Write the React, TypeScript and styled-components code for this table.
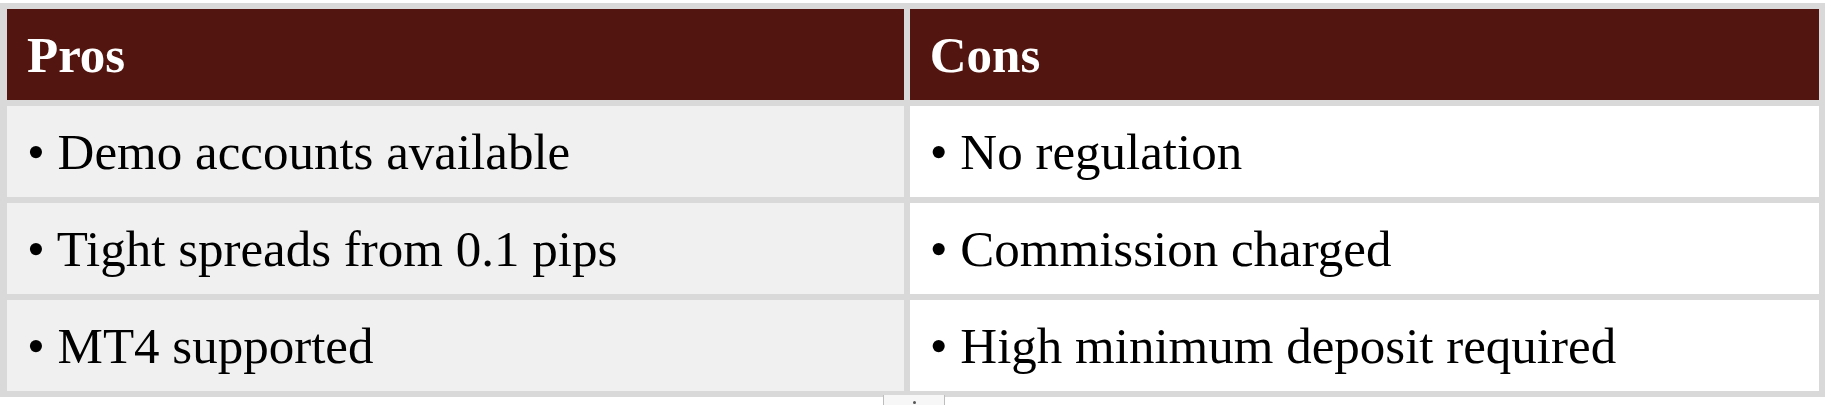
import styled, { createGlobalStyle } from 'styled-components';

const GlobalStyle = createGlobalStyle`
  html, body {
    margin: 0;
    padding: 0;
    background: #ffffff;
  }
  body {
    font-family: "Liberation Serif", "Times New Roman", serif;
    color: #000;
  }
`;

const Page = styled.div`
  padding-top: 3px;
  width: 1828px;
`;

const Table = styled.table`
  width: 1825px;
  border-collapse: separate;
  border-spacing: 6px;
  background: #d9d9d9;
  border-left: 1px solid #d9d9d9;
  table-layout: fixed;
`;

const HeadCell = styled.th`
  height: 91px;
  padding: 0 20px;
  background: #52150f;
  color: #ffffff;
  font-size: 51px;
  font-weight: 700;
  text-align: left;
  vertical-align: middle;
`;

const Cell = styled.td<{ $shaded?: boolean }>`
  height: 91px;
  padding: 0 20px;
  background: ${(p) => (p.$shaded ? '#f0f0f0' : '#ffffff')};
  font-size: 51px;
  vertical-align: middle;
  white-space: nowrap;
`;

const Footer = styled.div`
  display: flex;
  justify-content: center;
  margin-top: -2px;
`;

const Handle = styled.div`
  width: 60px;
  height: 10px;
  background: #f7f7f7;
  border-left: 1px solid #bdbdbd;
  border-right: 1px solid #bdbdbd;
  display: flex;
  justify-content: center;
  align-items: flex-end;
`;

const HandleDot = styled.span`
  width: 3px;
  height: 3px;
  background: #555;
  border-radius: 50%;
  margin-bottom: 1px;
`;

const rows = [
  ['Demo accounts available', 'No regulation'],
  ['Tight spreads from 0.1 pips', 'Commission charged'],
  ['MT4 supported', 'High minimum deposit required'],
];

export default function App() {
  return (
    <Page>
      <GlobalStyle />
      <Table>
        <colgroup>
          <col style={{ width: 857 }} />
          <col style={{ width: 869 }} />
        </colgroup>
        <thead>
          <tr>
            <HeadCell>Pros</HeadCell>
            <HeadCell>Cons</HeadCell>
          </tr>
        </thead>
        <tbody>
          {rows.map(([pro, con]) => (
            <tr key={pro}>
              <Cell $shaded>• {pro}</Cell>
              <Cell>• {con}</Cell>
            </tr>
          ))}
        </tbody>
      </Table>
      <Footer>
        <Handle>
          <HandleDot />
        </Handle>
      </Footer>
    </Page>
  );
}
